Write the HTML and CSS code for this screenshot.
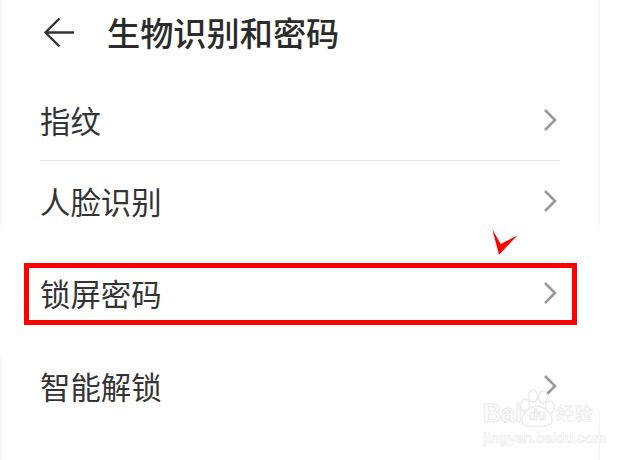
FILE: index.html
```html
<!DOCTYPE html>
<html lang="zh-CN">
<head>
    <meta charset="UTF-8">
    <title>生物识别和密码</title>
    <link rel="stylesheet" href="styles.css">
</head>
<body>

<div class="screen">
    <div class="header">
        <svg class="back" width="32" height="32" viewBox="0 0 32 32">
            <path d="M15.5 1.5 L1.5 15.5 L15.5 29.5 M1.5 15.5 H30" fill="none" stroke="#333" stroke-width="2.4"/>
        </svg>
        <h2>生物识别和密码</h2>
    </div>

    <div class="group">
        <div class="row">
            <span>指纹</span>
            <svg class="chevron" width="14" height="24" viewBox="0 0 14 24"><path d="M2 2 L12 12 L2 22" /></svg>
        </div>
        <div class="row">
            <span>人脸识别</span>
            <svg class="chevron" width="14" height="24" viewBox="0 0 14 24"><path d="M2 2 L12 12 L2 22" /></svg>
        </div>
    </div>

    <div class="group">
        <div class="row">
            <span>锁屏密码</span>
            <svg class="chevron" width="14" height="24" viewBox="0 0 14 24"><path d="M2 2 L12 12 L2 22" /></svg>
        </div>
    </div>

    <div class="group">
        <div class="row">
            <span>智能解锁</span>
            <svg class="chevron" width="14" height="24" viewBox="0 0 14 24"><path d="M2 2 L12 12 L2 22" /></svg>
        </div>
    </div>
</div>

<!-- red annotation on top of the screenshot -->
<div class="mark-box"></div>
<svg class="mark-tick" width="26" height="26" viewBox="0 0 26 26">
    <path d="M0.3 0.3 L8.7 15 L25.7 6.3 L7 25.7 Z" fill="#f00"/>
</svg>

<div class="watermark">
    <svg class="wm-paw" width="40" height="42" viewBox="0 0 40 42">
        <g fill="#fff" stroke="#ebebeb" stroke-width="1.4">
            <ellipse cx="6" cy="16" rx="4.5" ry="6"/>
            <ellipse cx="14" cy="7" rx="4.5" ry="6"/>
            <ellipse cx="24" cy="8" rx="4.5" ry="6"/>
            <ellipse cx="31" cy="18" rx="4.5" ry="6"/>
            <path d="M17 17 C11 18 4 23 3 30 C2 37 9 38 17 37 C26 38 34 37 33 30 C32 23 24 17 17 17 Z"/>
        </g>
    </svg>
    <div class="wm-top">
        <span class="wm-bai">Bai</span>
        <span class="wm-du">du</span>
        <span class="wm-cn">经验</span>
    </div>
    <div class="wm-url">jingyan.baidu.com</div>
</div>

</body>
</html>
```

FILE: styles.css
```css
html, body {
    margin: 0;
    background: #fff;
}
body {
    width: 630px;
    height: 460px;
    position: relative;
    overflow: hidden;
    font-family: "Noto Sans CJK SC", "Noto Sans", sans-serif;
    color: #333;
}
/* faint edges of the phone screenshot, they only show in the grey gaps */
.screen {
    box-sizing: border-box;
    width: 600px;
    height: 460px;
    padding: 0 40px;
    background:
        linear-gradient(#f5f5f5, #f5f5f5) 0 0 / 1px 228px no-repeat,
        linear-gradient(#f5f5f5, #f5f5f5) 0 355px / 1px 105px no-repeat,
        linear-gradient(#f5f5f5, #f5f5f5) 599px 0 / 1px 228px no-repeat,
        linear-gradient(#f5f5f5, #f5f5f5) 599px 410px / 1px 50px no-repeat;
}
.header {
    display: flex;
    align-items: center;
    gap: 31px;
    height: 64px;
    margin-left: 4px;
    margin-bottom: 16px;
}
.header .back {
    flex: none;
    margin-top: 2px;
}
h2 {
    margin: 0;
    font-size: 33.2px;
    font-weight: 500;
    line-height: 64px;
    color: #2b2b2b;
}
.group {
    margin-bottom: 13px;
}
.row {
    display: flex;
    align-items: center;
    justify-content: space-between;
    height: 80px;
    font-size: 30.4px;
}
.row + .row {
    height: 79px;
    border-top: 1px solid #e4e4e4;
}
.chevron {
    margin-right: 3px;
}
.chevron path {
    fill: none;
    stroke: #999;
    stroke-width: 2.6;
}
.mark-box {
    position: absolute;
    left: 24px;
    top: 263px;
    width: 543px;
    height: 52px;
    border: 5px solid #f00;
}
.mark-tick {
    position: absolute;
    left: 492px;
    top: 229px;
}
.watermark {
    position: absolute;
    left: 483px;
    top: 392px;
    width: 116px;
    height: 56px;
    font-family: "Liberation Sans", "Noto Sans CJK SC", sans-serif;
}
.wm-paw {
    position: absolute;
    left: 36px;
    top: -3px;
}
.wm-top {
    position: relative;
    display: flex;
    align-items: flex-end;
    height: 36px;
    white-space: nowrap;
    color: #fff;
    -webkit-text-stroke: 1px #e9e9e9;
}
.wm-bai {
    font-size: 25px;
    font-weight: bold;
    line-height: 30px;
    width: 43px;
}
.wm-du {
    font-size: 14px;
    font-weight: bold;
    line-height: 26px;
    width: 30px;
    text-indent: 3px;
}
.wm-cn {
    font-size: 18.5px;
    line-height: 28px;
    -webkit-text-stroke: 0.6px #e9e9e9;
}
.wm-url {
    position: relative;
    font-size: 14px;
    font-weight: bold;
    line-height: 16px;
    margin-top: 2px;
    white-space: nowrap;
    color: #fff;
    -webkit-text-stroke: 0.6px #e9e9e9;
}
```
